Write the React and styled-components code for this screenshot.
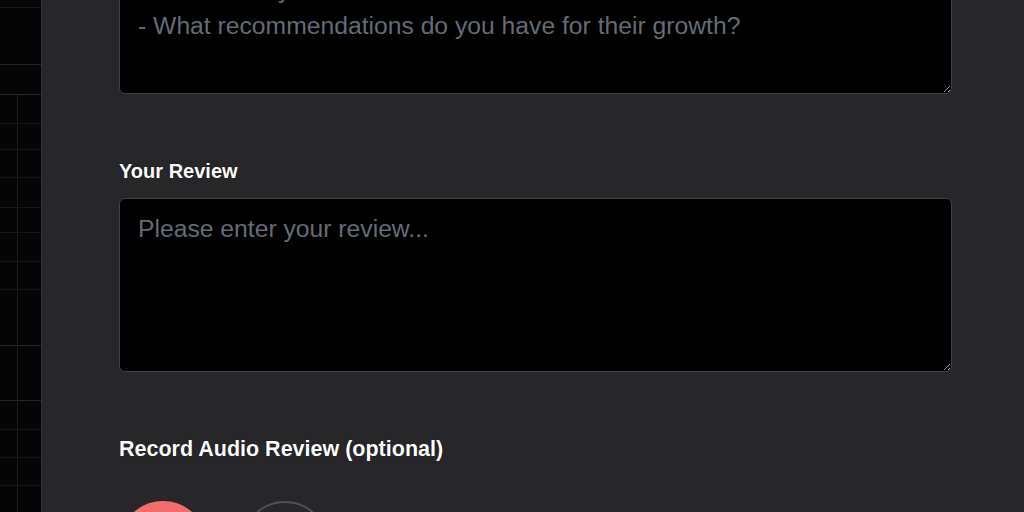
import React from 'react';
import styled, { createGlobalStyle } from 'styled-components';

const GlobalStyle = createGlobalStyle`
  html, body {
    margin: 0;
    padding: 0;
    background: #050505;
    overflow: hidden;
  }
  * { box-sizing: border-box; }
`;

const gridRows = [
  { y: 7 }, { y: 64, major: true }, { y: 94, major: true }, { y: 123 }, { y: 149 },
  { y: 177 }, { y: 207 }, { y: 232 }, { y: 261 }, { y: 289 },
  { y: 345, major: true }, { y: 400, major: true }, { y: 429 }, { y: 457 }, { y: 485 },
];

export default function App() {
  return (
    <>
      <GlobalStyle />
      <Page>
        <Backdrop>
          <svg width="41" height="512" viewBox="0 0 41 512">
            {gridRows.map(r => (
              <line key={r.y} x1="0" x2="41" y1={r.y + 0.5} y2={r.y + 0.5}
                stroke={r.major ? '#262626' : '#161616'} strokeWidth="1" />
            ))}
            <line x1="17.5" x2="17.5" y1="94" y2="512" stroke="#1c1c1c" strokeWidth="1" />
          </svg>
        </Backdrop>
        <Panel>
          <Form>
            <Field>
              <TextArea
                readOnly
                $height={171}
                placeholder={'Please share your feedback on:\n- How do they contribute to the team?\n- What recommendations do you have for their growth?'}
              />
            </Field>
            <Field>
              <Label>Your Review</Label>
              <TextArea placeholder="Please enter your review..." />
            </Field>
            <Field>
              <Label $size={21.5}>Record Audio Review (optional)</Label>
              <Recorder>
                <RoundButton $variant="record" aria-label="Record" />
                <RoundButton $variant="idle" aria-label="Play" />
              </Recorder>
            </Field>
          </Form>
        </Panel>
      </Page>
    </>
  );
}

const Page = styled.div`
  display: flex;
  width: 1024px;
  height: 512px;
  overflow: hidden;
  font-family: "Liberation Sans", Arial, sans-serif;
`;

const Backdrop = styled.div`
  width: 41px;
  flex-shrink: 0;
  background: #050505;
  svg { display: block; }
`;

const Panel = styled.div`
  flex: 1;
  background: #27272a;
  border-left: 1px solid #1f3352;
  padding: 0 72px 0 77px;
`;

const Form = styled.div`
  display: flex;
  flex-direction: column;
  gap: 65px;
  margin-top: -77px;
`;

const Field = styled.div`
  display: flex;
  flex-direction: column;
`;

const Label = styled.label`
  display: block;
  color: #ffffff;
  font-size: ${p => p.$size || 20}px;
  line-height: 24px;
  font-weight: 700;
  margin-bottom: 15px;
  text-shadow: 0 0 1px #000;
`;

const TextArea = styled.textarea`
  display: block;
  width: 100%;
  height: ${p => p.$height || 174}px;
  padding: 12px 16px 12px 18px;
  background: #000000;
  color: #e5e7eb;
  border: 1px solid #3b4250;
  border-radius: 6px;
  font-family: "Liberation Sans", Arial, sans-serif;
  font-size: 24.7px;
  line-height: 36px;
  color-scheme: dark;
  resize: vertical;
  outline: none;
  &::placeholder {
    color: #646b78;
  }
`;

const Recorder = styled.div`
  display: flex;
  gap: 34px;
  padding-top: 25px;
`;

const RoundButton = styled.button`
  width: 88px;
  height: 88px;
  flex-shrink: 0;
  border-radius: 50%;
  padding: 0;
  cursor: pointer;
  background: ${p => (p.$variant === 'record' ? '#f46d6d' : 'transparent')};
  border: ${p => (p.$variant === 'record' ? '2px solid #f46d6d' : '2px solid #4b5160')};
`;
